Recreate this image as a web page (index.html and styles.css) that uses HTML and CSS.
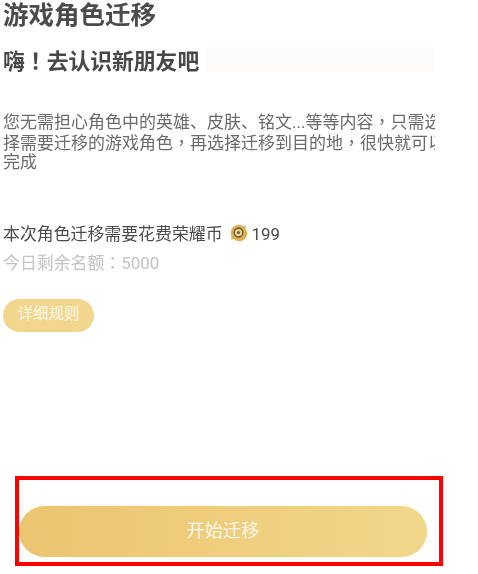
FILE: index.html
```html
<!DOCTYPE html>
<html lang="zh">
<head>
<meta charset="utf-8">
<title>游戏角色迁移</title>
<link rel="stylesheet" href="styles.css">
</head>
<body>
<main class="content">
  <h1 class="title">游戏角色迁移</h1>
  <div class="subtitle-row">
    <h2 class="subtitle">嗨<span class="punct" lang="zh-Hant">！</span>去认识新朋友吧</h2>
    <div class="subtitle-fill"></div>
  </div>
  <div class="intro">
    <p class="intro-line">您无需担心角色中的英雄、皮肤、铭文...等等内容<span class="punct" lang="zh-Hant">，</span>只需选</p>
    <p class="intro-line">择需要迁移的游戏角色<span class="punct" lang="zh-Hant">，</span>再选择迁移到目的地<span class="punct" lang="zh-Hant">，</span>很快就可以</p>
    <p class="intro-line">完成</p>
  </div>
  <p class="cost"><span>本次角色迁移需要花费荣耀币</span>
    <svg class="coin" viewBox="0 0 20 20" aria-hidden="true">
      <path d="M2 10a8 8 0 0 1 13-6.2l3-1.3-1 3.2A8 8 0 0 1 5 16.5l-3 1 .8-3A8 8 0 0 1 2 10z" fill="#e0ad4f"/>
      <circle cx="10" cy="10" r="5.6" fill="#f2d488"/>
      <circle cx="10" cy="10" r="4.6" fill="none" stroke="#6e5a36" stroke-width="1.6"/>
      <circle cx="10" cy="10" r="1.7" fill="#7a5f30"/>
    </svg>
    <span>199</span></p>
  <p class="quota">今日剩余名额<span class="punct" lang="zh-Hant">：</span>5000</p>
  <div class="pill">详细规则</div>
</main>
<section class="action">
  <div class="start">开始迁移</div>
</section>
</body>
</html>
```
FILE: styles.css
```css
* { box-sizing: border-box; }
html, body { margin: 0; padding: 0; background: #fff; }
body {
  width: 478px;
  height: 574px;
  overflow: hidden;
  display: flex;
  flex-direction: column;
  font-family: "Roboto", "Noto Sans CJK SC", sans-serif;
  color: #4a4a4a;
}
.punct { font-family: "Noto Sans CJK TC", sans-serif; }
.content {
  width: 435px;
  height: 476px;
  padding-left: 3px;
  overflow: hidden;
  flex: none;
}
.title {
  margin: 0;
  height: 30px;
  font-size: 25.5px;
  line-height: 30px;
  font-weight: 700;
  color: #4b4b4b;
  filter: blur(0.35px);
}
.subtitle-row {
  display: flex;
  gap: 6px;
  height: 25px;
  margin-top: 17px;
  align-items: center;
}
.subtitle {
  margin: 0;
  height: 25px;
  font-size: 21.8px;
  line-height: 25px;
  font-weight: 700;
  white-space: nowrap;
  color: #484848;
  filter: blur(0.35px);
}
.subtitle-fill { flex: 1; height: 25px; background: #fdfcfa; }
.intro { margin-top: 38px; }
.intro-line {
  margin: 0;
  height: 21px;
  font-size: 17px;
  line-height: 21px;
  white-space: nowrap;
  color: #6b6b6b;
  filter: blur(0.35px);
}
.cost {
  margin: 49px 0 0;
  font-size: 16.9px;
  line-height: 24px;
  height: 24px;
  white-space: nowrap;
  display: flex;
  align-items: center;
  gap: 5px;
  color: #4c4c4c;
  filter: blur(0.3px);
}
.coin { width: 19px; height: 19px; flex: none; margin-top: -4px; margin-left: 1px; margin-right: -1px; }
.quota {
  margin: 4px 0 0;
  height: 24px;
  font-size: 16.9px;
  line-height: 24px;
  white-space: nowrap;
  color: #c3c3c3;
  filter: blur(0.3px);
}
.pill {
  width: 91px;
  height: 33px;
  margin-top: 25px;
  padding-bottom: 8px;
  border-radius: 17px;
  background: #f2d68e;
  color: #fdf8ea;
  font-size: 15.4px;
  display: flex;
  align-items: center;
  justify-content: center;
}
.action {
  width: 428px;
  height: 90px;
  margin-left: 15px;
  border: 4px solid #ff0000;
  padding: 26px 12px 4px 0;
  flex: none;
}
.start {
  height: 51px;
  padding-bottom: 6px;
  border-radius: 26px;
  background: linear-gradient(90deg, #ebc470, #f2d78b);
  color: #fbf6e6;
  font-size: 18.2px;
  display: flex;
  align-items: center;
  justify-content: center;
}
```
